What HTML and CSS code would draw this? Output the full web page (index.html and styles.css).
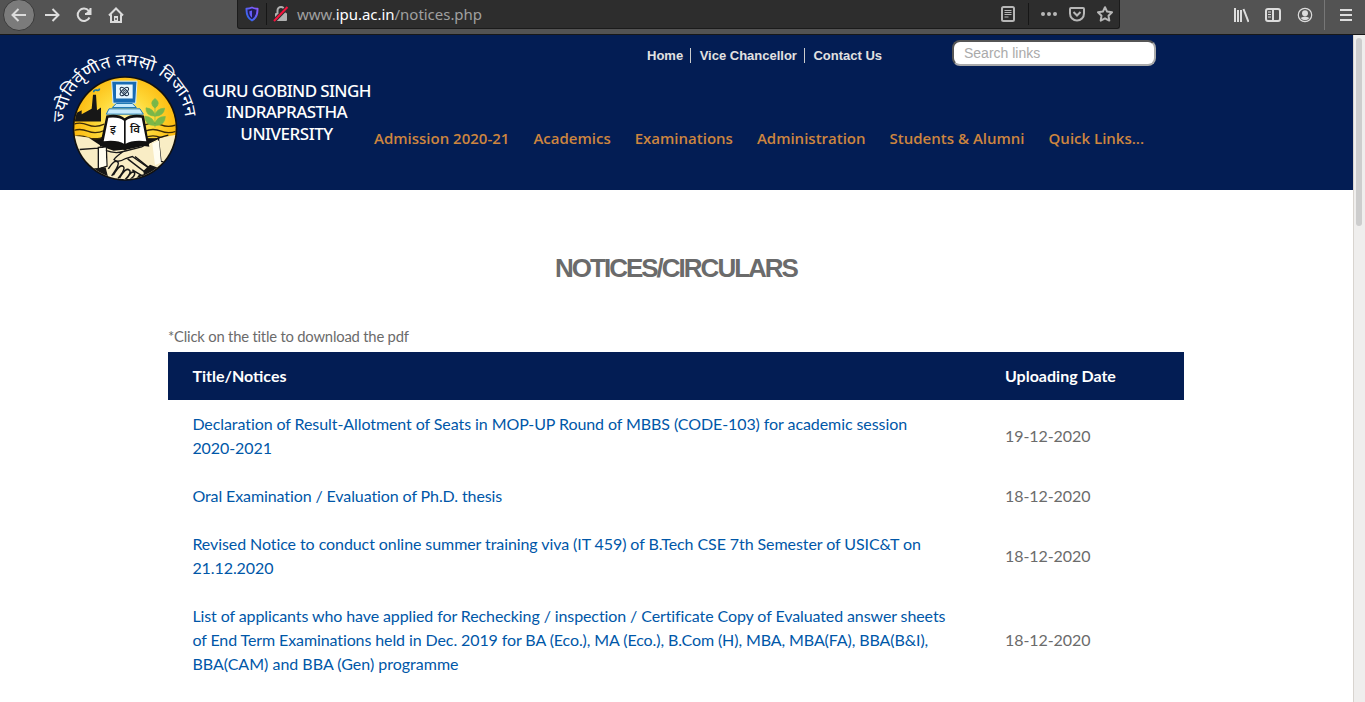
FILE: index.html
```html
<!DOCTYPE html>
<html lang="en">
<head>
<meta charset="utf-8">
<title>Notices/Circulars</title>
<link rel="stylesheet" href="styles.css">
</head>
<body>
<div class="toolbar">
  <div class="nav-buttons">
    <span class="back"><svg width="16" height="16" viewBox="0 0 16 16"><path d="M15 8H2M7.500 2L1.500 8l6 6"/></svg></span>
    <svg class="ic" width="16" height="16" viewBox="0 0 16 16"><path d="M1 8h13M8.500 2l6 6-6 6"/></svg>
    <svg class="ic" width="16" height="16" viewBox="0 0 16 16"><path d="M13.500 10.500A6.200 6.200 0 1 1 12.800 4M14.500 1v6H9"/><path class="solid" d="M15 1v6H9z"/></svg>
    <svg class="ic" width="16" height="16" viewBox="0 0 16 16"><path d="M1 8.500l7-7 7 7M3 7.500V15h10V7.500"/><path class="solid" d="M6 9h4v6H6z"/><path class="hole" d="M8 11v2"/></svg>
  </div>
  <div class="urlbar">
    <svg class="shield" width="14" height="16" viewBox="0 0 14 16"><defs><linearGradient id="sh" x1="1" y1="0" x2="0" y2="1"><stop offset="0" stop-color="#9059ff"/><stop offset="1" stop-color="#2468e8"/></linearGradient></defs><path d="M7 1.500c2 .9 3.500 1.200 5.500 1.300C12.700 8 11.500 12 7 14.500 2.500 12 1.300 8 1.500 2.800 3.500 2.700 5 2.400 7 1.500z" fill="#201c50" stroke="url(#sh)" stroke-width="1.900"/><path d="M7 4.500v7.200C5 10 4.300 8 4.300 5.200z" fill="#655cf8"/></svg>
    <i class="divider"></i>
    <svg class="lock" width="16" height="16" viewBox="0 0 16 16"><path d="M4.500 7V4.500a3.500 3.500 0 0 1 7 0V7" fill="none" stroke="#b1b1b1" stroke-width="2"/><rect x="2" y="7" width="12" height="8" rx="1" fill="#b1b1b1"/><path d="M1 15L14.500 1" stroke="#2d2d2d" stroke-width="4"/><path d="M1 15L14.500 1" stroke="#f5123c" stroke-width="2"/></svg>
    <span class="address">www.<b>ipu.ac.in</b>/notices.php</span>
    <span class="url-actions">
      <svg width="16" height="16" viewBox="0 0 16 16"><rect x="2" y="1" width="12" height="14" rx="1.500"/><path class="thin" d="M4.500 4.500h7M4.500 6.500h7M4.500 8.500h7M4.500 11h4"/></svg>
      <i class="divider"></i>
      <svg width="16" height="16" viewBox="0 0 16 16"><g class="dots"><circle cx="2" cy="8" r="2"/><circle cx="8" cy="8" r="2"/><circle cx="14" cy="8" r="2"/></g></svg>
      <svg width="16" height="16" viewBox="0 0 16 16"><path d="M2 2h12q1 0 1 1v4.500a7 7 0 0 1-14 0V3q0-1 1-1zM4.500 6L8 9.500 11.500 6"/></svg>
      <svg width="16" height="16" viewBox="0 0 16 16"><path stroke-linejoin="round" d="M8 1.200l2.100 4.400 4.900.7-3.500 3.400.8 4.900L8 12.300l-4.300 2.300.8-4.900L1 6.300l4.900-.7z"/></svg>
    </span>
  </div>
  <div class="tools">
    <svg class="ic" width="16" height="16" viewBox="0 0 16 16"><path d="M2 1v14M5 3v12M8 3v12M10.500 2l5 13"/></svg>
    <svg class="ic" width="16" height="16" viewBox="0 0 16 16"><rect x="1" y="2" width="14" height="12" rx="2"/><path d="M8 2v12"/><path class="thin" d="M3 5h3M3 7.500h3M3 10h3"/></svg>
    <svg class="ic" width="16" height="16" viewBox="0 0 16 16"><circle class="thin" cx="8" cy="8" r="6.700"/><circle class="solid" cx="8" cy="6.300" r="3"/><path class="solid" d="M3.500 11Q8 7.800 12.500 11 8 15.500 3.500 11z"/></svg>
    <i class="menu-line"></i>
    <svg class="ic" width="16" height="16" viewBox="0 0 16 16"><path d="M2 3h12M2 8h12M2 13h12"/></svg>
  </div>
</div>
<div class="viewport">
  <div class="page">
    <header class="site-header">
      <svg class="brand" width="154" height="155" viewBox="45 35 154 155">
        <defs>
          <clipPath id="disc"><circle cx="240" cy="249" r="152"/></clipPath>
          <radialGradient id="sun" gradientUnits="userSpaceOnUse" cx="240" cy="230" r="156"><stop offset="0" stop-color="#fff5b0"/><stop offset=".5" stop-color="#fedb3c"/><stop offset="1" stop-color="#fdb80c"/></radialGradient>
          <path id="arc" d="M64.500 122.500 A60.500 57 0 0 1 185.500 122.500"/>
        </defs>
        <g transform="translate(45 45.500) scale(.33333)">
          <circle cx="240" cy="249" r="157" fill="#111"/>
          <g clip-path="url(#disc)">
            <rect x="80" y="88" width="320" height="190" fill="url(#sun)"/>
            <path d="M80 238q24-10 48 0t50-2M80 257q24-10 48 0t50-2M80 276q24-10 48 0t50-2M300 238q24-10 48 0t52-2M300 257q24-10 48 0t52-2M300 276q24-10 48 0t52-2" fill="none" stroke="#3d2c08" stroke-width="4"/>
            <path d="M84 228v-20l26-14v12l30-16 4-42h9l3 46 12-8v42z" fill="#171717"/>
            <path d="M146 140q0-8 9-6t8-5" fill="none" stroke="#1879a8" stroke-width="5"/>
            <path d="M80 270l50 6 42 28 34 12 44-5 48-10 50-24 60-12v150H80z" fill="#f9edc5"/>
            <path d="M104 312l56-4M180 314q30 12 55 4M235 318l55-14 50-27 30-8M235 318q-22 15-28 24 10 12 35-3l20-6 50 35M160 306l24 0 2 56-26 8zM340 276l8 72 34 4" fill="none" stroke="#171717" stroke-width="4"/>
            <path d="M162 309l20-3 2 54-22 7zM322 294l20-9 6 66-18 8z" fill="#fffdf0"/>
            <path d="M128 370l54-4 10 40H130zM280 390l35-32 28 10 20-4v55H260z" fill="#161616"/>
            <path d="M190 370q18-29 28-21 8 7-18 42M205 389q20-35 30-26 8 7-16 36M224 397q19-33 29-23 8 7-13 29M246 398q15-25 22-17 5 8-14 22M248 340l49 38q5 14-9 11l-26-16M270 333l45 36" fill="#f9edc5" stroke="#171717" stroke-width="4.500"/>
          </g>
          <path d="M330 246v-78M330 240q-31 0-30-28 27 2 30 28 1-27 31-27-1 28-31 27M330 212q-29-1-27-25 24 2 27 25 2-23 29-24-3 24-29 24M330 188q-20-15 0-29 20 14 0 29" fill="#79b749" stroke="#79b749" stroke-width="2"/>
          <path d="M200 107h76l-4 66h-68z" fill="#176bb4" stroke="#d6f0ff" stroke-width="3"/>
          <path d="M213 117h50v42h-50z" fill="#e6f7ff"/>
          <g fill="none" stroke="#172b45" stroke-width="3"><ellipse cx="238" cy="138" rx="16" ry="7" transform="rotate(45 238 138)"/><ellipse cx="238" cy="138" rx="16" ry="7" transform="rotate(-45 238 138)"/><circle cx="238" cy="138" r="3"/></g>
          <path d="M214 174h48l12 12h-72zM192 190h93l10 16H184z" fill="#c6eafb" stroke="#1f78b5" stroke-width="3"/>
          <path d="M184 210q36-7 55 8 20-15 58-8l16 94q-52-10-73 12-20-20-76-12z" fill="#111"/>
          <path d="M190 217q31-4 47 9v69q-19-13-61-8zM242 226q16-13 48-9l14 70q-42-5-62 8z" fill="#fff"/>
        </g>
        <g class="book-text"><text x="110" y="133">इ</text><text x="130" y="133">वि</text></g>
        <text class="motto"><textPath href="#arc" textLength="179" lengthAdjust="spacingAndGlyphs">ज्योतिर्वृणीत तमसो विजानन</textPath></text>
      </svg>
      <div class="wordmark"><div>GURU GOBIND SINGH</div><div>INDRAPRASTHA</div><div class="last">UNIVERSITY</div></div>
      <div class="header-right">
        <div class="top-row">
          <nav class="top-links"><a>Home</a><a>Vice Chancellor</a><a>Contact Us</a></nav>
          <input class="search" type="text" placeholder="Search links">
        </div>
        <nav class="main-nav"><a>Admission 2020-21</a><a>Academics</a><a>Examinations</a><a>Administration</a><a>Students &amp; Alumni</a><a>Quick Links...</a></nav>
      </div>
    </header>
    <main class="content">
      <h1>NOTICES/CIRCULARS</h1>
      <p class="hint">*Click on the title to download the pdf</p>
      <table class="notices">
        <thead><tr><th>Title/Notices</th><th class="date">Uploading Date</th></tr></thead>
        <tbody>
          <tr><td><a>Declaration of Result-Allotment of Seats in MOP-UP Round of MBBS (CODE-103) for academic session<br>2020-2021</a></td><td>19-12-2020</td></tr>
          <tr><td><a class="snug">Oral Examination / Evaluation of Ph.D. thesis</a></td><td>18-12-2020</td></tr>
          <tr><td><a>Revised Notice to conduct online summer training viva (IT 459) of B.Tech CSE 7th Semester of USIC&amp;T on<br>21.12.2020</a></td><td>18-12-2020</td></tr>
          <tr><td><a class="snug">List of applicants who have applied for Rechecking / inspection / Certificate Copy of Evaluated answer sheets<br>of End Term Examinations held in Dec. 2019 for BA (Eco.), MA (Eco.), B.Com (H), MBA, MBA(FA), BBA(B&amp;I),<br><span class="even">BBA(CAM) and BBA (Gen) programme</span></a></td><td>18-12-2020</td></tr>
        </tbody>
      </table>
    </main>
  </div>
  <div class="scrollbar"><div class="thumb"></div></div>
</div>
</body>
</html>
```
FILE: styles.css
```css
* { box-sizing: border-box; }
body { margin: 0; height: 702px; overflow: hidden; background: #fff; font-family: Lato, sans-serif; }
.toolbar { display: flex; height: 35px; background: #535353; border-bottom: 1px solid #181818; }
.toolbar svg { flex: none; fill: none; stroke: #dcdcdc; stroke-width: 2; }
.toolbar .solid { fill: #dcdcdc; stroke: none; }
.toolbar .hole { stroke: #535353; stroke-width: 1.500; }
.toolbar .thin { stroke-width: 1.200; }
.nav-buttons { display: flex; width: 237px; height: 29px; align-items: center; padding-left: 3px; gap: 16px; }
.back { display: flex; align-items: center; justify-content: center; width: 32px; height: 32px; margin-right: -7px; border: 1px solid #3a3a3a; border-radius: 50%; background: #7b7b7b; }
.urlbar { display: flex; align-items: center; width: 883px; height: 29px; padding-left: 7px; background: #2d2d2d; border: 1px solid #1b1b1b; border-top: 0; border-radius: 0 0 3px 3px; }
.toolbar .shield, .toolbar .lock { stroke: none; }
.divider { width: 1px; height: 22px; background: #161616; }
.shield { margin-right: 7px; }
.lock { margin: 0 8px 0 6px; }
.address { color: #a0a0a0; font: 15px/22px "Noto Sans", sans-serif; letter-spacing: -.03px; }
.address b { font-weight: 400; color: #fff; }
.url-actions { display: flex; margin-left: auto; align-items: center; gap: 12px; padding-right: 6px; }
.toolbar .url-actions svg { stroke: #b7b7b7; }
.toolbar .url-actions .dots { fill: #b7b7b7; stroke: none; }
.tools { display: flex; height: 29px; align-items: center; margin-left: 113px; gap: 16px; }
.menu-line { width: 1px; height: 31px; background: #777; margin: 0 -3px 0 -5px; }
.viewport { display: flex; height: 667px; }
.page { width: 1353px; }
.site-header { display: flex; height: 155px; padding-left: 45px; background: #031d54; }
.brand { flex: none; overflow: visible; }
.motto { fill: #fff; font: 16.500px "Noto Sans", "Noto Sans Devanagari", sans-serif; }
.book-text { fill: #111; font: 600 11.500px "Noto Sans", sans-serif; }
.wordmark { width: 175px; padding-top: 44.500px; color: #fff; text-align: center; white-space: nowrap; font: 500 17px/21.500px "Noto Sans", "Open Sans", sans-serif; letter-spacing: -.620px; }
.wordmark .last { letter-spacing: -.500px; }
.top-row { display: flex; height: 33px; padding: 5px 0 0 265px; align-items: flex-start; }
.top-links { display: flex; width: 313px; padding-top: 8px; font: bold 13px/16px "Liberation Sans", sans-serif; color: #e1e1e1; }
.top-links a { height: 15px; padding: 0 7px 0 8.500px; border-right: 1px solid #ccc; white-space: nowrap; }
.top-links a:first-child { padding-left: 8px; }
.top-links a:last-child { border: 0; }
.search { width: 204px; height: 26px; padding: 0 10px; border: 2px inset #aaa; border-radius: 8px; background: #fff; font: 14px "Liberation Sans", sans-serif; }
.search::placeholder { color: #aaa; }
.main-nav { display: flex; gap: 24px; padding-top: 60px; color: #cd853f; font: 600 15px/20px "Open Sans", sans-serif; white-space: nowrap; }
.content { width: 1016px; margin: 0 0 0 168px; color: #6b6b6b; }
h1 { margin: 0; padding-top: 60px; text-align: center; font: bold 26px/36px "Liberation Sans", sans-serif; letter-spacing: -2px; }
.hint { margin: 0; padding-top: 38px; height: 66px; font-size: 14.800px; line-height: 24px; letter-spacing: -.200px; }
.notices { width: 1016px; border-collapse: collapse; table-layout: fixed; font-size: 16px; line-height: 24px; }
.notices th { padding: 12px 24px; text-align: left; background: #031d54; color: #fff; }
.notices .date { width: 203px; }
.notices td { padding: 12px 24px; white-space: nowrap; letter-spacing: -.080px; }
.notices th:first-child, .notices td:first-child { padding-left: 24.400px; }
.notices a { color: #0057a8; }
.notices .snug { letter-spacing: -.100px; }
.notices .even { letter-spacing: 0; }
.scrollbar { width: 12px; background: #efeeed; border-left: 1px solid #d8d4cf; padding: 3px 2px; }
.thumb { width: 6px; height: 188px; border-radius: 3px; background: #cdcdcd; }
```
